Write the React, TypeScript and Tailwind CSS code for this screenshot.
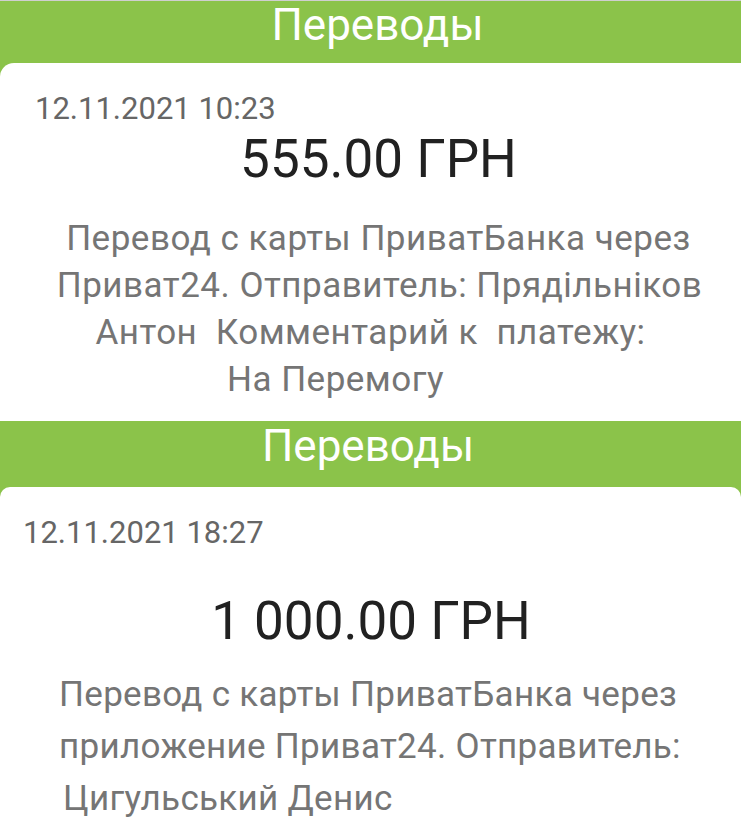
const font = { fontFamily: "Roboto, 'Noto Sans', sans-serif" };

type Transfer = {
  date: string;
  amount: string;
  lines: { text: string; className: string }[];
};

const first: Transfer = {
  date: "12.11.2021 10:23",
  amount: "555.00 ГРН",
  lines: [
    { text: "Перевод с карты ПриватБанка через", className: "text-center pl-[16px]" },
    { text: "Приват24. Отправитель: Прядільніков", className: "text-center pl-[18px]" },
    { text: "Антон  Комментарий к  платежу:", className: "text-center" },
    { text: "На Перемогу", className: "text-center pr-[70px]" },
  ],
};

const second: Transfer = {
  date: "12.11.2021 18:27",
  amount: "1 000.00 ГРН",
  lines: [
    { text: "Перевод с карты ПриватБанка через", className: "pl-[59px]" },
    { text: "приложение Приват24. Отправитель:", className: "pl-[59px]" },
    { text: " Цигульський Денис", className: "pl-[54px]" },
  ],
};

export default function App() {
  return (
    <div className="w-[741px] h-[830px] overflow-hidden bg-white" style={font}>
      <div className="h-px bg-[#cfcfcf]" />
      {/* first screenshot */}
      <div className="bg-[#8bc34a]">
        <div className="h-[62px] pt-[3px] pl-[14px] text-center text-[44px] leading-[42px] text-white">
          Переводы
        </div>
        <div className="bg-white rounded-tl-[14px] pt-[31px] pb-[18px]">
          <div className="pl-[35px] text-[31px] leading-[30px] text-[#666666]">
            {first.date}
          </div>
          <div className="mt-[9px] pl-[16px] text-center text-[53px] leading-[52px] text-[#212121]">
            {first.amount}
          </div>
          <div className="mt-[30px] text-[35px] leading-[47px] tracking-[0.5px] text-[#757575] whitespace-pre">
            {first.lines.map((l, i) => (
              <div key={i} className={l.className}>
                {l.text}
              </div>
            ))}
          </div>
        </div>
      </div>
      {/* second screenshot */}
      <div className="bg-[#8bc34a]">
        <div className="h-[66px] pt-[4px] pr-[5px] text-center text-[44px] leading-[42px] text-white">
          Переводы
        </div>
        <div className="bg-white rounded-t-[10px] pt-[31px]">
          <div className="pl-[23px] text-[31px] leading-[30px] text-[#666666]">
            {second.date}
          </div>
          <div className="mt-[47px] pl-[1px] text-center text-[53px] leading-[52px] text-[#212121]">
            {second.amount}
          </div>
          <div className="mt-[22px] text-[35px] leading-[52px] tracking-[0.3px] text-[#757575] whitespace-pre">
            {second.lines.map((l, i) => (
              <div key={i} className={l.className}>
                {l.text}
              </div>
            ))}
          </div>
        </div>
      </div>
    </div>
  );
}
